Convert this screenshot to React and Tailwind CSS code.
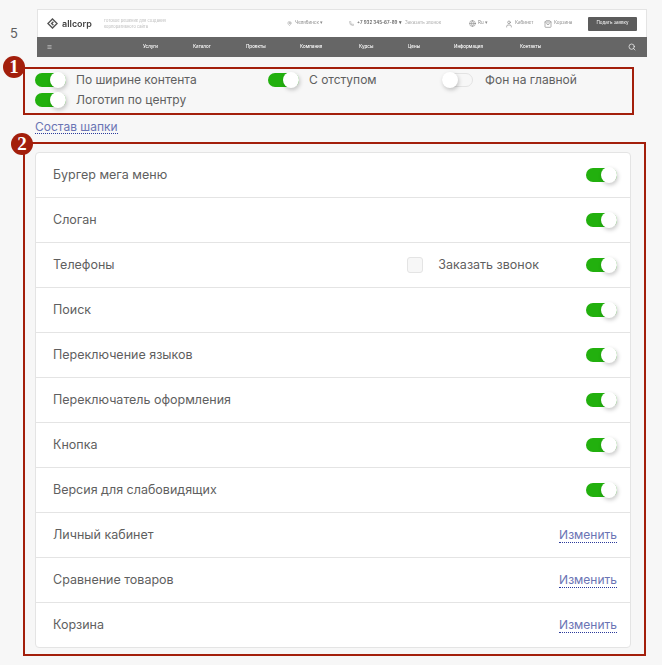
import { Search, Globe, Phone, MapPin, User, ShoppingBag, Menu } from "lucide-react"

const rows = [
  { label: "Бургер мега меню", toggle: true },
  { label: "Слоган", toggle: true },
  { label: "Телефоны", toggle: true, check: "Заказать звонок" },
  { label: "Поиск", toggle: true },
  { label: "Переключение языков", toggle: true },
  { label: "Переключатель оформления", toggle: true },
  { label: "Кнопка", toggle: true },
  { label: "Версия для слабовидящих", toggle: true },
  { label: "Личный кабинет" },
  { label: "Сравнение товаров" },
  { label: "Корзина" },
]

const nav = [
  ["Услуги", "w-[50px]"],
  ["Каталог", "w-[53px]"],
  ["Проекты", "w-[54px]"],
  ["Компания", "w-[59px]"],
  ["Курсы", "w-[49px]"],
  ["Цены", "w-[46px]"],
  ["Информация", "w-[66px]"],
  ["Контакты", "w-[108px]"],
]

function Toggle({ on = true }) {
  return (
    <span className={`relative block h-[14px] w-[31px] shrink-0 rounded-full ${on ? "bg-[#22b00e]" : "border border-[#e3e3e3] bg-[#f7f7f7]"}`}>
      <span className={`absolute size-4 rounded-full bg-white shadow-[1px_2px_4px_rgba(0,0,0,0.22)] ${on ? "right-0 top-[-1.5px]" : "left-[-1px] top-[-2px]"}`} />
    </span>
  )
}

function Badge({ n, className }) {
  return (
    <span className={`absolute flex size-[22px] items-center justify-center rounded-full bg-[#a31f0c] font-['Liberation_Serif',serif] text-[19px] font-bold text-white ${className}`}>
      {n}
    </span>
  )
}

function Option({ label, on, className }) {
  return (
    <label className={`flex items-center ${on === false ? "gap-[12px]" : "gap-[10px]"} ${className}`}>
      <Toggle on={on} />
      <span>{label}</span>
    </label>
  )
}

function HeaderPreview() {
  return (
    <div className="w-[610px] blur-[0.4px]">
      <div className="flex h-[28px] items-center border border-b-0 border-[#e4e4e4] bg-white text-[4.5px] text-[#8a8a8a]">
        <svg viewBox="0 0 24 24" className="ml-[9px] size-[11px] fill-none stroke-[#555] stroke-[3]">
          <path d="M12 2l10 10-10 10L2 12z" />
          <path d="M14 8l-4 4 4 4" />
        </svg>
        <span className="ml-[4px] w-[42px] text-[9px] font-semibold text-[#444]">allcorp</span>
        <span className="w-[183px] text-[4px] leading-[6px] text-[#bbb]">
          Готовое решение для создания
          <br />
          корпоративного сайта
        </span>
        <MapPin className="size-[5px]" />
        <span className="ml-[3px] w-[54px]">Челябинск ▾</span>
        <Phone className="size-[5px]" />
        <span className="ml-[3px] w-[48px] font-semibold text-[#666]">+7 932 345-67-89 ▾</span>
        <span className="w-[64px] text-[#aaa]">Заказать звонок</span>
        <Globe className="size-[7px] text-[#888]" />
        <span className="ml-[2px] w-[27px]">Ru ▾</span>
        <User className="size-[8px]" />
        <span className="ml-[2px] w-[29px]">Кабинет</span>
        <ShoppingBag className="size-[8px]" />
        <span className="ml-[2px] w-[34px]">Корзина</span>
        <span className="flex h-[14px] w-[49px] items-center justify-center rounded-[1px] bg-[#5c5c5c] text-white">Подать заявку</span>
      </div>
      <div className="flex h-[20px] items-center bg-[#666] text-[4.5px] font-medium text-white">
        <Menu className="ml-[10px] w-[5px]" />
        <span className="w-[91px]" />
        {nav.map(([item, width]) => (
          <span key={item} className={width}>{item}</span>
        ))}
        <Search className="size-[8px]" />
      </div>
    </div>
  )
}

export default function App() {
  return (
    <div className="relative h-[665px] w-[662px] overflow-hidden bg-[#f7f7f7] font-['Inter',sans-serif] text-[12px] text-[#5f5f5f]">
      <div className="flex pt-[9px]">
        <span className="w-[37px] pl-[10px] pt-[15px] text-[13px]">5</span>
        <HeaderPreview />
      </div>

      <div className="relative ml-[23px] mt-[10px] flex h-[48px] w-[611px] flex-wrap content-start border-2 border-[#a31f0c] pl-[10px] pt-[3px]">
        <Badge n="1" className="left-[-22px] top-[-13px]" />
        <div className="flex w-[233px] flex-col gap-[4px]">
          <Option label="По ширине контента" className="h-4" />
          <Option label="Логотип по центру" className="h-4" />
        </div>
        <Option label="С отступом" className="h-4 w-[174px]" />
        <Option label="Фон на главной" on={false} className="h-4" />
      </div>

      <a href="#" className="ml-[35px] mt-[6px] block w-fit border-b border-dotted border-[#2b3a9b] text-[12px] leading-[12px] text-[#6a74b4]">
        Состав шапки
      </a>

      <div className="relative ml-[23px] mt-[8px] h-[514px] w-[623px] border-2 border-[#a31f0c] pl-[10px] pt-[8px]">
        <Badge n="2" className="left-[-14px] top-[-11px]" />
        <div className="w-[596px] rounded-[4px] border border-[#e4e4e4] bg-white text-[12.5px]">
          {rows.map((row, i) => (
            <div key={row.label} className={`flex items-center pl-[17px] pr-[13px] ${i > 0 ? "h-[45px] border-t border-[#e4e4e4]" : "h-[44px]"}`}>
              <span className="mr-auto">{row.label}</span>
              {row.check && (
                <label className="mr-[47px] flex items-center gap-[15px]">
                  <span className="size-4 rounded-[3px] border border-[#e4e4e4] bg-[#f7f7f7]" />
                  <span>{row.check}</span>
                </label>
              )}
              {row.toggle ? (
                <Toggle />
              ) : (
                <a href="#" className="border-b border-dotted border-[#2b3a9b] text-[12px] leading-[14px] text-[#6a74b4]">Изменить</a>
              )}
            </div>
          ))}
        </div>
      </div>
    </div>
  )
}
